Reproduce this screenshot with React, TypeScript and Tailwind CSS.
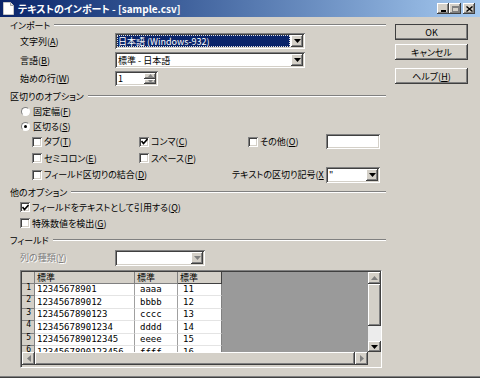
import React from 'react';

const raised =
  'shadow-[inset_-1px_-1px_#404040,inset_1px_1px_#ffffff,inset_-2px_-2px_#808080,inset_2px_2px_#d4d0c8]';
const sunken =
  'shadow-[inset_1px_1px_#808080,inset_-1px_-1px_#ffffff,inset_2px_2px_#404040,inset_-2px_-2px_#d4d0c8]';

function Label({ t, k, close = true }: { t: string; k: string; close?: boolean }) {
  return (
    <span className="whitespace-nowrap">
      {t}(<u>{k}</u>
      {close ? ')' : ''}
    </span>
  );
}

function Arrow({ dir = 'down', gray = false }: { dir?: 'down' | 'up' | 'left' | 'right'; gray?: boolean }) {
  const fill = gray ? '#808080' : '#000000';
  const pts = {
    down: '0,0 7,0 3.5,4',
    up: '0,4 7,4 3.5,0',
    left: '4,0 4,7 0,3.5',
    right: '0,0 0,7 4,3.5',
  }[dir];
  const vertical = dir === 'down' || dir === 'up';
  return (
    <svg width={vertical ? 7 : 4} height={vertical ? 4 : 7} viewBox={vertical ? '0 0 7 4' : '0 0 4 7'}>
      <polygon points={pts} fill={fill} />
    </svg>
  );
}

function Section({ title, className = '' }: { title: string; className?: string }) {
  return (
    <div className={`flex items-center h-[14px] ${className}`}>
      <span className="whitespace-nowrap">{title}</span>
      <div className="flex-1 ml-[4px] border-t border-t-[#808080] border-b border-b-white" />
    </div>
  );
}

function Combo({
  text,
  selected = false,
  disabled = false,
  className = '',
}: {
  text: string;
  selected?: boolean;
  disabled?: boolean;
  className?: string;
}) {
  return (
    <div className={`flex h-[16px] p-[2px] bg-white ${sunken} ${className}`}>
      <div className="flex-1 flex items-stretch pr-[1px] min-w-0">
        {selected ? (
          <div className="flex-1 flex items-center bg-[#0a246a] text-white px-[1px] outline-1 outline-dotted outline-[#e0e0e0] -outline-offset-1">
            {text}
          </div>
        ) : (
          <div className="flex-1 flex items-center px-[1px] whitespace-nowrap">{text}</div>
        )}
      </div>
      <div className={`w-[12px] h-full bg-[#d4d0c8] ${raised} flex items-center justify-center`}>
        <Arrow gray={disabled} />
      </div>
    </div>
  );
}

function Check({ checked = false }: { checked?: boolean }) {
  return (
    <div className={`w-[10px] h-[10px] shrink-0 bg-white ${sunken} flex items-center justify-center`}>
      {checked && (
        <svg width="7" height="7" viewBox="0 0 7 7">
          <polyline points="0.5,3 2.5,5.5 6.5,1" fill="none" stroke="#000" strokeWidth="1.6" />
        </svg>
      )}
    </div>
  );
}

function Radio({ checked = false }: { checked?: boolean }) {
  return (
    <div className="w-[9px] h-[9px] shrink-0 rounded-full bg-white border border-t-[#808080] border-l-[#808080] border-r-white border-b-white flex items-center justify-center">
      {checked && <div className="w-[3px] h-[3px] rounded-full bg-black" />}
    </div>
  );
}

function TitleBar() {
  return (
    <div className="h-[17px] flex items-center bg-gradient-to-r from-[#0a246a] to-[#a6caf0] pl-[3px] pr-[5px]">
      <svg width="11" height="13" viewBox="0 0 11 13">
        <path d="M0.5 0.5h7l3 3v9h-10z" fill="#ffffff" stroke="#c8c8c8" />
        <path d="M7.5 0.5v3h3" fill="#e0e0e0" stroke="#a0a0a0" />
      </svg>
      <span className="ml-[4px] text-white font-bold text-[10px] flex-1 whitespace-nowrap">
        テキストのインポート - [sample.csv]
      </span>
      <div className="flex items-center">
        <div className={`w-[12px] h-[11px] bg-[#d4d0c8] ${raised} flex items-end justify-center pb-[2px]`}>
          <div className="w-[5px] h-[2px] bg-black" />
        </div>
        <div className={`w-[12px] h-[11px] bg-[#d4d0c8] ${raised} flex items-center justify-center`}>
          <div className="w-[7px] h-[6px] border border-[#808080] border-t-2" />
        </div>
        <div className={`ml-[2px] w-[12px] h-[11px] bg-[#d4d0c8] ${raised} flex items-center justify-center`}>
          <svg width="7" height="6" viewBox="0 0 7 6">
            <path d="M0.5 0.5l6 5M6.5 0.5l-6 5" stroke="#000" strokeWidth="1.4" />
          </svg>
        </div>
      </div>
    </div>
  );
}

function Button({ children, def = false }: { children: React.ReactNode; def?: boolean }) {
  return (
    <div
      className={`w-[73px] h-[16px] flex items-center justify-center bg-[#d4d0c8] ${raised} ${
        def ? 'outline outline-1 outline-[#404040] -outline-offset-1' : ''
      }`}
    >
      {children}
    </div>
  );
}

const rows = [
  ['1', '12345678901', 'aaaa', '11'],
  ['2', '123456789012', 'bbbb', '12'],
  ['3', '1234567890123', 'cccc', '13'],
  ['4', '12345678901234', 'dddd', '14'],
  ['5', '123456789012345', 'eeee', '15'],
  ['6', '1234567890123456', 'ffff', '16'],
];

function Table() {
  return (
    <div className="mt-[5px] ml-[10px] w-[362px] h-[98px] border border-t-[#808080] border-l-[#808080] border-r-white border-b-white">
      <div className="h-full border-t border-l border-[#404040] border-r-0 border-b-0 flex flex-col">
        <div className="flex h-[80px]">
          <div className="flex-1 bg-[#9a9a9a] overflow-hidden font-['DejaVu_Sans_Mono','Noto_Sans_CJK_JP',monospace] text-[9px]">
            <div className="flex h-[12px] w-[200px] bg-[#d4d0c8] font-['Noto_Sans_CJK_JP',sans-serif]">
              <div className="w-[13px] border-r border-b border-[#808080]" />
              <div className="w-[100px] pl-[2px] leading-[11px] border-r border-b border-[#808080]">標準</div>
              <div className="w-[43px] pl-[2px] leading-[11px] border-r border-b border-[#808080]">標準</div>
              <div className="w-[44px] pl-[2px] leading-[11px] border-r border-b border-[#404040]">標準</div>
            </div>
            {rows.map((r, i) => (
              <div key={r[0]} className={`flex w-[200px] ${i % 2 === 0 ? 'h-[12px]' : 'h-[13px]'}`}>
                <div className="w-[13px] bg-[#d4d0c8] border-r border-b border-[#808080] flex justify-end pr-[3px] leading-[8px] text-[8px]">
                  {r[0]}
                </div>
                <div className="w-[100px] bg-white pl-[2px] flex items-center border-r border-[#a0a0a0] border-b border-b-[#e4e4e4]">
                  {r[1]}
                </div>
                <div className="w-[43px] bg-white pl-[5px] flex items-center border-r border-[#a0a0a0] border-b border-b-[#e4e4e4]">
                  {r[2]}
                </div>
                <div className="w-[44px] bg-white pl-[5px] flex items-center border-r border-[#808080] border-b border-b-[#e4e4e4]">
                  {r[3]}
                </div>
              </div>
            ))}
          </div>
          <div className="w-[13px] flex flex-col">
            <div className={`h-[12px] bg-[#d4d0c8] ${raised} flex items-center justify-center`}>
              <Arrow dir="up" gray />
            </div>
            <div className={`h-[42px] bg-[#d4d0c8] ${raised}`} />
            <div className="h-[15px] bg-[#ececec]" />
            <div className={`h-[11px] bg-[#d4d0c8] ${raised} flex items-center justify-center`}>
              <Arrow dir="down" />
            </div>
          </div>
        </div>
        <div className="flex h-[13px]">
          <div className={`w-[13px] bg-[#d4d0c8] ${raised} flex items-center justify-center`}>
            <Arrow dir="left" gray />
          </div>
          <div className={`flex-1 bg-[#d4d0c8] ${raised}`} />
          <div className={`w-[13px] bg-[#d4d0c8] ${raised} flex items-center justify-center`}>
            <Arrow dir="right" gray />
          </div>
          <div className="w-[13px] bg-[#d4d0c8]" />
        </div>
      </div>
    </div>
  );
}

export default function App() {
  return (
    <div className="w-[480px] h-[378px] bg-[#d4d0c8] flex flex-col text-[9px] leading-none text-black font-['Noto_Sans_CJK_JP','Noto_Sans',sans-serif] [font-feature-settings:'palt'] border-b border-b-[#404040] overflow-hidden">
      <TitleBar />
      <div className="flex flex-1 border-b border-b-[#808080]">
        {/* left pane */}
        <div className="w-[386px] pl-[10px] flex flex-col">
          <Section title="インポート" className="mt-[1px]" />
          <div className="flex items-center h-[16px] mt-[1px] pl-[10px]">
            <span className="w-[95px]">
              <Label t="文字列" k="A" />
            </span>
            <Combo selected text="日本語 (Windows-932)" className="w-[190px]" />
          </div>
          <div className="flex items-center h-[16px] mt-[3px] pl-[10px]">
            <span className="w-[95px]">
              <Label t="言語" k="B" />
            </span>
            <Combo text="標準 - 日本語" className="w-[190px]" />
          </div>
          <div className="flex items-center h-[15px] mt-[3px] pl-[10px]">
            <span className="w-[95px]">
              <Label t="始めの行" k="W" />
            </span>
            <div className={`w-[43px] h-[15px] p-[2px] bg-white ${sunken} flex`}>
              <div className="flex-1 flex items-center pl-[1px]">1</div>
              <div className="w-[12px] flex flex-col">
                <div className={`flex-1 bg-[#d4d0c8] ${raised} flex items-center justify-center`}>
                  <svg width="5" height="3" viewBox="0 0 5 3">
                    <polygon points="0,3 5,3 2.5,0" fill="#808080" />
                  </svg>
                </div>
                <div className={`flex-1 bg-[#d4d0c8] ${raised} flex items-center justify-center`}>
                  <svg width="5" height="3" viewBox="0 0 5 3">
                    <polygon points="0,0 5,0 2.5,3" fill="#808080" />
                  </svg>
                </div>
              </div>
            </div>
          </div>

          <Section title="区切りのオプション" className="mt-[3px]" />
          <div className="flex items-center h-[14px] mt-[1px] pl-[11px] gap-[3px]">
            <Radio />
            <Label t="固定幅" k="F" />
          </div>
          <div className="flex items-center h-[14px] mt-[1px] pl-[11px] gap-[3px]">
            <Radio checked />
            <Label t="区切る" k="S" />
          </div>
          <div className="flex items-center h-[15px] mt-[1px] pl-[22px]">
            <div className="w-[107px] flex items-center gap-[2px]">
              <Check />
              <Label t="タブ" k="T" />
            </div>
            <div className="w-[109px] flex items-center gap-[2px]">
              <Check checked />
              <Label t="コンマ" k="C" />
            </div>
            <div className="w-[78px] flex items-center gap-[2px]">
              <Check />
              <Label t="その他" k="O" />
            </div>
            <div className={`w-[54px] h-[15px] bg-white ${sunken}`} />
          </div>
          <div className="flex items-center h-[14px] mt-[2px] pl-[22px]">
            <div className="w-[107px] flex items-center gap-[2px]">
              <Check />
              <Label t="セミコロン" k="E" />
            </div>
            <div className="w-[109px] flex items-center gap-[2px]">
              <Check />
              <Label t="スペース" k="P" />
            </div>
          </div>
          <div className="flex items-center h-[15px] mt-[2px] pl-[22px]">
            <div className="w-[200px] flex items-center gap-[2px]">
              <Check />
              <Label t="フィールド区切りの結合" k="D" />
            </div>
            <div className="w-[94px] flex items-center whitespace-nowrap">
              <Label t="テキストの区切り記号" k="X" close={false} />
            </div>
            <Combo text={'"'} className="w-[54px]" />
          </div>

          <Section title="他のオプション" className="mt-[3px]" />
          <div className="flex items-center h-[14px] mt-[1px] pl-[10px] gap-[2px]">
            <Check checked />
            <Label t="フィールドをテキストとして引用する" k="Q" />
          </div>
          <div className="flex items-center h-[14px] mt-[2px] pl-[10px] gap-[2px]">
            <Check />
            <Label t="特殊数値を検出" k="G" />
          </div>

          <Section title="フィールド" className="mt-[3px]" />
          <div className="flex items-center h-[15px] mt-[3px] pl-[10px]">
            <span className="w-[95px] text-[#808080] [text-shadow:1px_1px_0_#ffffff]">
              <Label t="列の種類" k="Y" />
            </span>
            <Combo disabled text="" className="w-[90px]" />
          </div>
          <Table />
        </div>

        {/* right buttons */}
        <div className="flex flex-col pl-[9px] pt-[7px]">
          <Button def>OK</Button>
          <div className="mt-[4px]">
            <Button>キャンセル</Button>
          </div>
          <div className="mt-[8px]">
            <Button>
              <Label t="ヘルプ" k="H" />
            </Button>
          </div>
        </div>
      </div>
    </div>
  );
}
